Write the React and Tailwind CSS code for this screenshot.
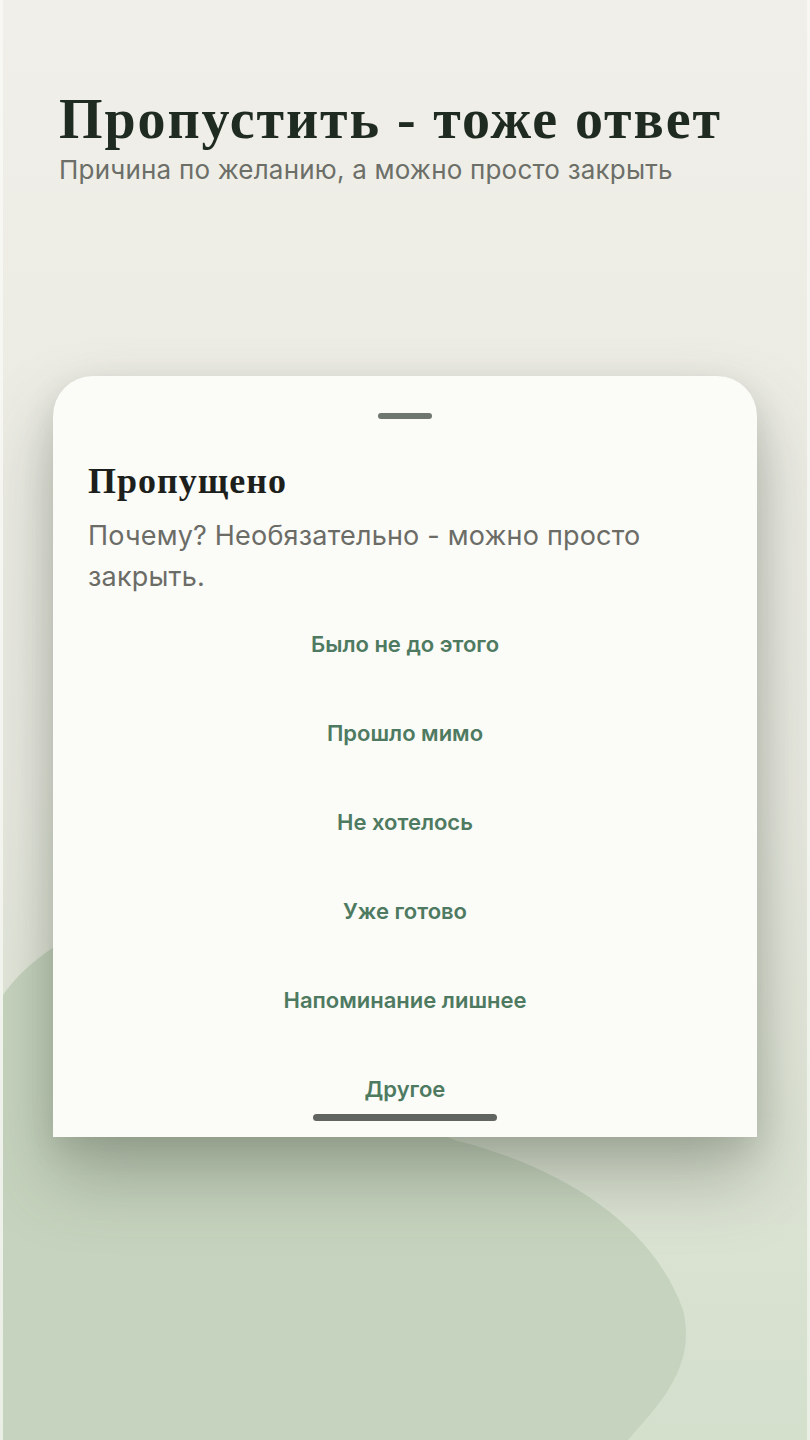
import React from "react";

const reasons = [
  "Было не до этого",
  "Прошло мимо",
  "Не хотелось",
  "Уже готово",
  "Напоминание лишнее",
  "Другое",
];

const serif = { fontFamily: '"Liberation Serif", "DejaVu Serif", serif' };

export default function App() {
  return (
    <div className="relative min-h-[1440px] w-[810px] overflow-hidden bg-gradient-to-b from-[#f0efe9] via-[#e8e9e0] via-55% to-[#d4dfcc] border-x-[3px] border-white/50 font-['Inter',sans-serif]">
      {/* background wave */}
      <svg
        className="absolute inset-0 h-[1440px] w-[810px]"
        viewBox="0 0 810 1440"
        preserveAspectRatio="none"
      >
        <path
          d="M0 995 C40 940 110 905 250 900 C380 900 380 1120 455 1141 C560 1168 650 1225 680 1310 C695 1370 650 1410 625 1440 L0 1440 Z"
          fill="#c6d3be"
        />
      </svg>

      <div className="relative flex flex-col">
        <header className="px-[56px] pt-[88px]">
          <h1
            className="text-[56px] font-bold leading-[62px] text-[#1f2b20] tracking-[1.9px]"
            style={serif}
          >
            Пропустить - тоже ответ
          </h1>
          <p className="mt-[4px] text-[26px] leading-[32px] tracking-[0.2px] text-[#6c6e68]">
            Причина по желанию, а можно просто закрыть
          </p>
        </header>

        <div className="mx-[50px] mt-[190px] h-[761px] rounded-t-[40px] bg-[#fbfbf7] shadow-[0_40px_70px_rgba(70,80,62,0.35),0_10px_30px_rgba(70,80,62,0.15)] flex flex-col">
          <div className="flex justify-center pt-[37px]">
            <div className="h-[6px] w-[54px] rounded-full bg-[#6f756f]" />
          </div>
          <div className="px-[35px] pt-[42px]">
            <h2
              className="text-[36px] font-bold leading-[40px] tracking-[1px] text-[#1c1f1c]"
              style={serif}
            >
              Пропущено
            </h2>
            <p className="mt-[14px] text-[27px] leading-[41px] tracking-[0.2px] text-[#6c6c67]">
              Почему? Необязательно - можно просто закрыть.
            </p>
          </div>
          <div className="mt-[25px] flex flex-col items-center gap-[45px]">
            {reasons.map((r) => (
              <button
                key={r}
                className="h-[44px] w-full text-[22px] font-semibold text-[#4e7a61] flex items-center justify-center"
              >
                {r}
              </button>
            ))}
          </div>
          <div className="flex justify-center mt-auto pb-[16px]">
            <div className="h-[7px] w-[184px] rounded-full bg-[#616561]" />
          </div>
        </div>
      </div>
    </div>
  );
}
